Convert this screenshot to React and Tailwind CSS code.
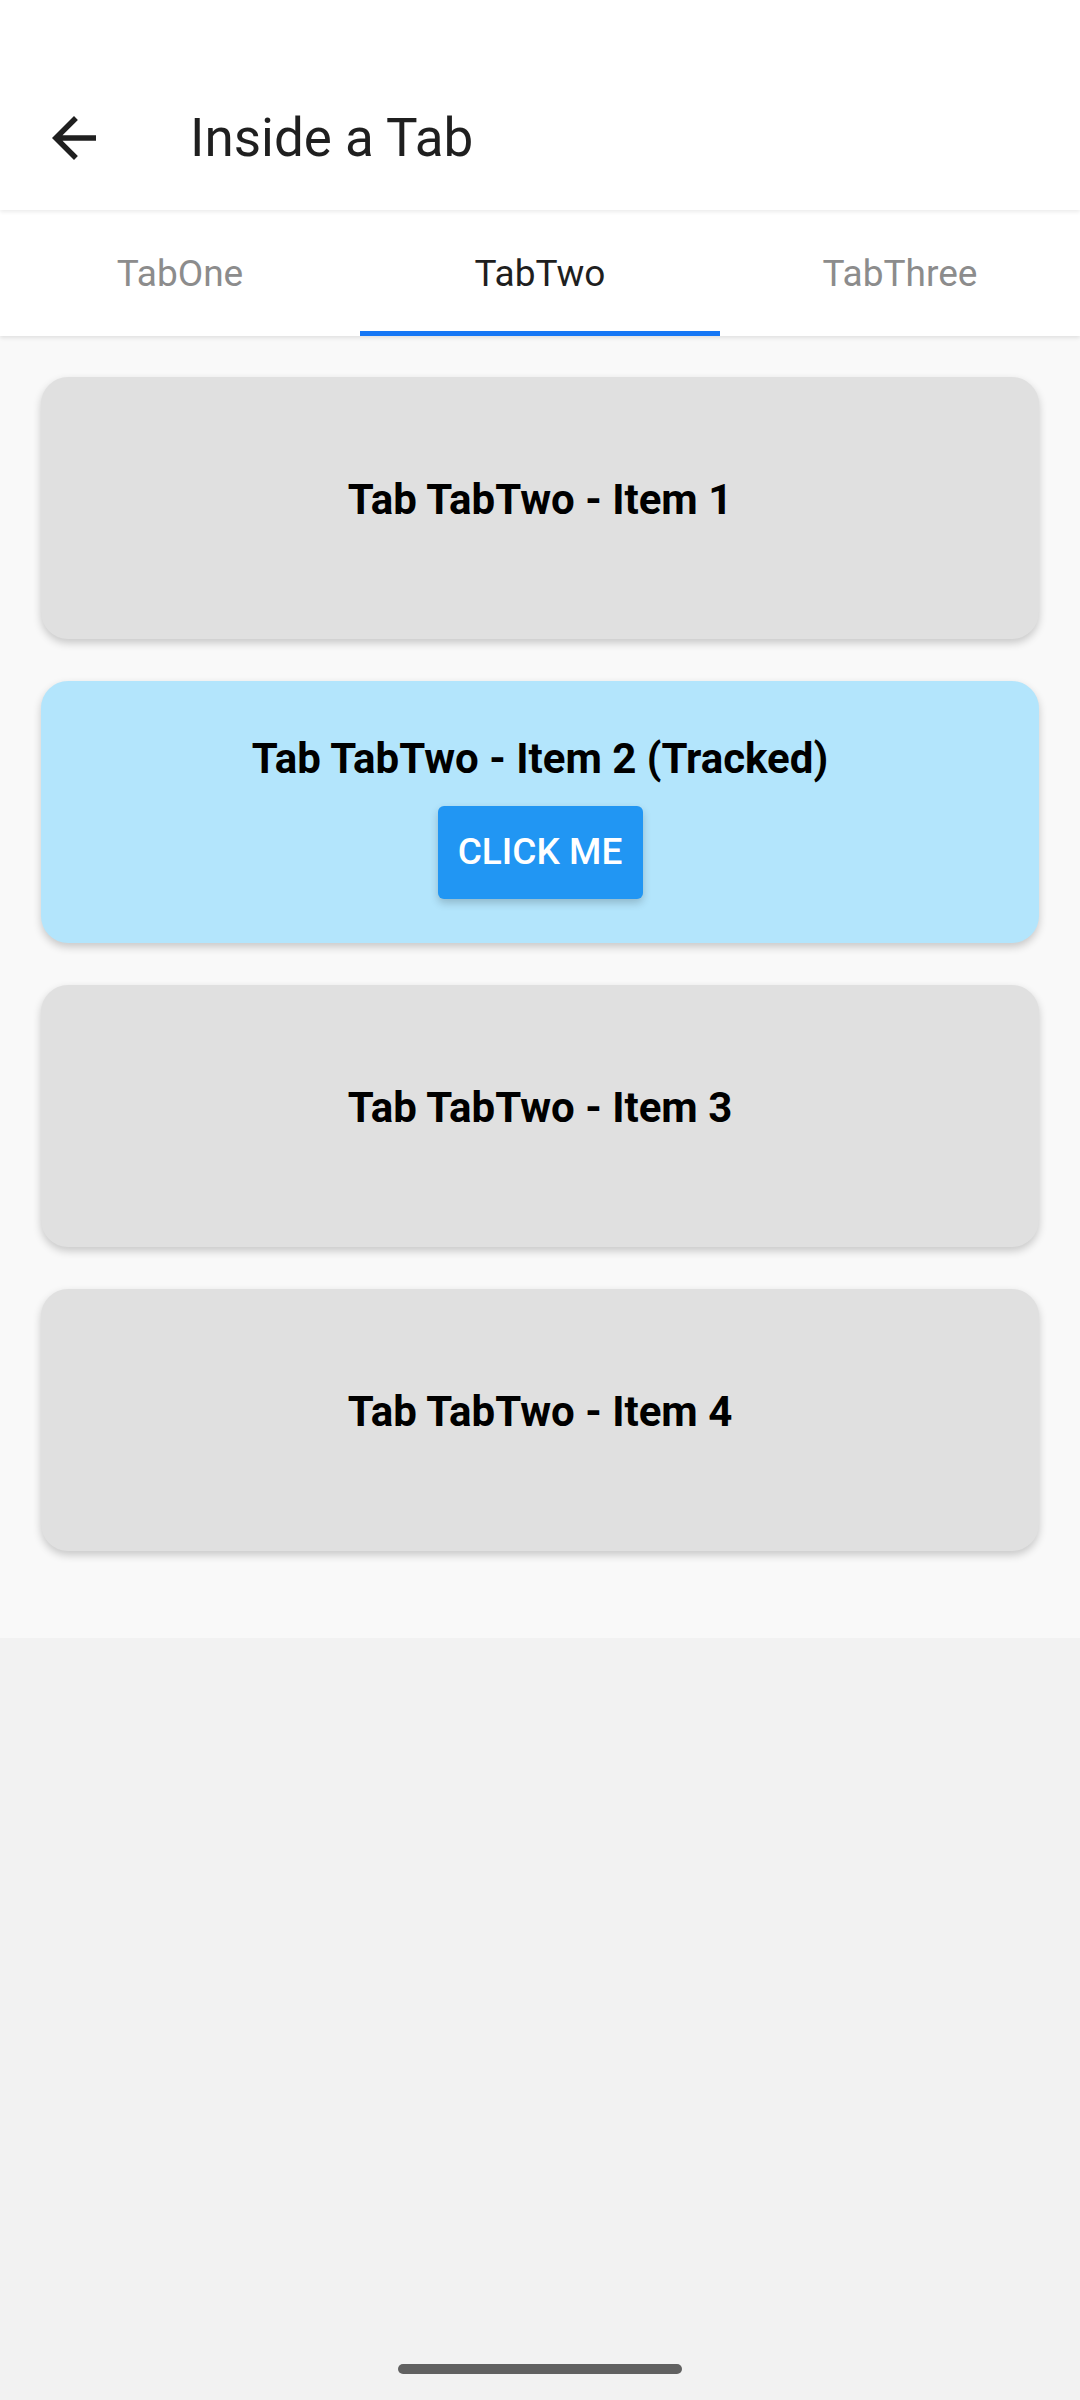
const items = [
  { label: "Tab TabTwo - Item 1" },
  { label: "Tab TabTwo - Item 2 (Tracked)", tracked: true },
  { label: "Tab TabTwo - Item 3" },
  { label: "Tab TabTwo - Item 4" },
];

const tabs = ["TabOne", "TabTwo", "TabThree"];

function BackArrow() {
  return (
    <svg viewBox="0 0 24 24" className="w-[66px] h-[66px]" fill="#1f1f1f">
      <path d="M20 11H7.83l5.59-5.59L12 4l-8 8 8 8 1.41-1.41L7.83 13H20v-2z" />
    </svg>
  );
}

export default function App() {
  const active = "TabTwo";

  return (
    <div
      className="min-h-[2400px] flex flex-col bg-[#f2f2f2]"
      style={{ fontFamily: "Roboto, 'Noto Sans', sans-serif" }}
    >
      {/* App bar */}
      <header className="relative z-20 h-[210px] bg-white pt-[56px] flex items-center shadow-[0_2px_4px_rgba(0,0,0,0.08)]">
        <div className="ml-[41px] mt-[10px]">
          <BackArrow />
        </div>
        <h1 className="ml-[83px] mt-[10px] text-[53px] leading-none text-[#1f1f1f]">
          Inside a Tab
        </h1>
      </header>

      {/* Tabs */}
      <nav className="relative z-10 h-[126px] bg-white grid grid-cols-3 shadow-[0_2px_4px_rgba(0,0,0,0.1)]">
        {tabs.map((tab) => {
          const isActive = tab === active;
          return (
            <div key={tab} className="relative flex items-center justify-center">
              <span
                className={`text-[37px] leading-none ${
                  isActive ? "text-[#1f1f1f]" : "text-[#8c8c8c]"
                }`}
              >
                {tab}
              </span>
              {isActive && (
                <div className="absolute bottom-0 left-0 right-0 h-[5px] bg-[#1677f5]" />
              )}
            </div>
          );
        })}
      </nav>

      {/* List */}
      <main className="bg-[#f9f9f9] px-[41px] pt-[41px] pb-[87px] flex flex-col gap-[42px]">
        {items.map((item) =>
          item.tracked ? (
            <div
              key={item.label}
              className="h-[262px] rounded-[27px] bg-[#b3e5fc] shadow-[0_4px_8px_rgba(0,0,0,0.2)] flex flex-col items-center justify-center pt-[8px]"
            >
              <h4 className="text-[42px] font-bold leading-[50px] text-black">
                {item.label}
              </h4>
              <button className="mt-[22px] h-[93px] w-[205px] rounded-[6px] bg-[#2196f3] text-white text-[37px] font-medium shadow-[0_4px_8px_rgba(0,0,0,0.2)]">
                CLICK ME
              </button>
            </div>
          ) : (
            <div
              key={item.label}
              className="h-[262px] rounded-[27px] bg-[#e0e0e0] shadow-[0_4px_8px_rgba(0,0,0,0.2)] flex items-center justify-center pb-[16px]"
            >
              <h4 className="text-[42px] font-bold leading-[50px] text-black">
                {item.label}
              </h4>
            </div>
          )
        )}
      </main>

      <div className="flex-1" />

      {/* Gesture handle */}
      <div className="flex justify-center mb-[26px]">
        <div className="w-[284px] h-[10px] rounded-full bg-[#616161]" />
      </div>
    </div>
  );
}
